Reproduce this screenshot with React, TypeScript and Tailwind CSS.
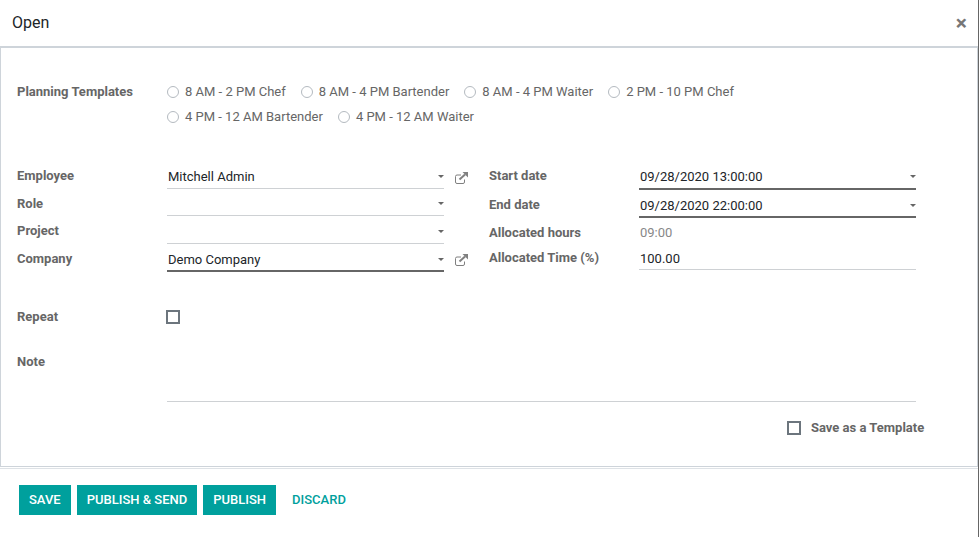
import React from "react";

const font = "font-['Roboto',sans-serif]";

function Caret() {
  return <span className="mb-[9px] ml-auto h-0 w-0 border-x-[3px] border-t-[3px] border-x-transparent border-t-[#666666]" />;
}

function Ext() {
  return (
    <div className="flex w-[28px] pl-[11px] pt-[10px]">
      <svg width="13" height="12" viewBox="0 0 13 12" fill="none" stroke="#808080" strokeWidth="1">
        <path d="M9.5 7.5V10A1.5 1.5 0 0 1 8 11.5H2A1.5 1.5 0 0 1 .5 10V4.5A1.5 1.5 0 0 1 2 3h4" />
        <path d="M4.5 7.5 10 2.5" strokeWidth="2" />
        <path d="M7.5 0H13v5.5z" fill="#808080" stroke="none" />
      </svg>
    </div>
  );
}

function Label({ children, className = "" }: { children: React.ReactNode; className?: string }) {
  return <div className={`text-[13px] font-bold leading-[20px] text-[#666666] ${className}`}>{children}</div>;
}

function Field({ value, h, thick, caret = true, low }: { value?: string; h: string; thick?: boolean; caret?: boolean; low?: boolean }) {
  return (
    <div className={`flex w-[277px] items-end pl-[1px] text-[13px] leading-[20px] text-[#212529] ${low ? "" : "pb-[1px]"} ${h} ${thick ? "border-b-2 border-[#666666]" : "border-b border-[#ced1d4]"}`}>
      <span>{value}</span>
      {caret && <Caret />}
    </div>
  );
}

function Radio({ label }: { label: string }) {
  return (
    <div className="mr-[15px] flex items-center">
      <span className="mr-[6px] h-[12px] w-[12px] rounded-full border border-[#b4bac0] bg-white" />
      <span className="text-[13px] leading-[25px] text-[#666666]">{label}</span>
    </div>
  );
}

function Check() {
  return <span className="block h-[14px] w-[14px] border-2 border-[#6c757d] bg-white" />;
}

function Btn({ children }: { children: React.ReactNode }) {
  return (
    <button className="h-[30px] bg-[#00a09d] px-[10px] text-[13px] font-medium text-white">{children}</button>
  );
}

export default function App() {
  return (
    <div className={`${font} flex h-[537px] w-[979px] flex-col overflow-hidden border-r border-r-[#666666] bg-white`}>
      <header className="flex h-[46px] items-center justify-between pl-[12px] pr-[11px]">
        <h4 className="text-[16px] leading-[24px] text-[#212529]">Open</h4>
        <span className="text-[21px] font-bold leading-none text-[#777777]">×</span>
      </header>

      <main className="flex h-[421px] flex-col border-b border-l border-r border-t-2 border-[#ced4da] pl-[16px]">
        <section className="mt-[31px] flex">
          <Label className="w-[150px] pt-[3px]">Planning Templates</Label>
          <div className="flex w-[620px] flex-wrap">
            <Radio label="8 AM - 2 PM Chef" />
            <Radio label="8 AM - 4 PM Bartender" />
            <Radio label="8 AM - 4 PM Waiter" />
            <Radio label="2 PM - 10 PM Chef" />
            <Radio label="4 PM - 12 AM Bartender" />
            <Radio label="4 PM - 12 AM Waiter" />
          </div>
        </section>

        <section className="mt-[33px] flex">
          <div className="flex w-[472px] flex-col">
            <div className="flex">
              <Label className="w-[150px] pt-[4px]">Employee</Label>
              <Field value="Mitchell Admin" h="h-[27px]" />
              <Ext />
            </div>
            <div className="flex">
              <Label className="w-[150px] pt-[5px]">Role</Label>
              <Field h="h-[27px]" />
            </div>
            <div className="flex">
              <Label className="w-[150px] pt-[5px]">Project</Label>
              <Field h="h-[28px]" />
            </div>
            <div className="flex">
              <Label className="w-[150px] pt-[5px]">Company</Label>
              <Field value="Demo Company" h="h-[28px]" thick low />
              <Ext />
            </div>
          </div>
          <div className="flex flex-col">
            <div className="flex">
              <Label className="w-[150px] pt-[4px]">Start date</Label>
              <Field value="09/28/2020 13:00:00" h="h-[28px]" thick />
            </div>
            <div className="flex">
              <Label className="w-[150px] pt-[5px]">End date</Label>
              <Field value="09/28/2020 22:00:00" h="h-[28px]" thick low />
            </div>
            <div className="flex">
              <Label className="w-[150px] pt-[5px]">Allocated hours</Label>
              <div className="flex h-[26px] items-center pt-[3px] pl-[1px] text-[13px] text-[#888888]">09:00</div>
            </div>
            <div className="flex">
              <Label className="w-[150px] pt-[4px]">Allocated Time (%)</Label>
              <Field value="100.00" h="h-[26px]" caret={false} low />
            </div>
          </div>
        </section>

        <section className="mt-[35px] flex items-center">
          <Label className="w-[149px]">Repeat</Label>
          <Check />
        </section>

        <section className="mt-[24px] flex">
          <Label className="w-[150px] pt-[1px]">Note</Label>
          <div className="h-[51px] w-[749px] border-b border-[#ced1d4]" />
        </section>

        <section className="mt-[16px] flex w-[908px] items-center justify-end">
          <div className="mr-[10px]"><Check /></div>
          <Label className="w-[114px] whitespace-nowrap">Save as a Template</Label>
        </section>
      </main>

      <footer className="mt-[1px] flex items-start gap-[6px] border-t border-[#dee2e6] pl-[19px] pt-[16px]">
        <Btn>SAVE</Btn>
        <Btn>PUBLISH &amp; SEND</Btn>
        <Btn>PUBLISH</Btn>
        <button className="h-[30px] px-[10px] text-[13px] font-medium text-[#00a09d]">DISCARD</button>
      </footer>
    </div>
  );
}
